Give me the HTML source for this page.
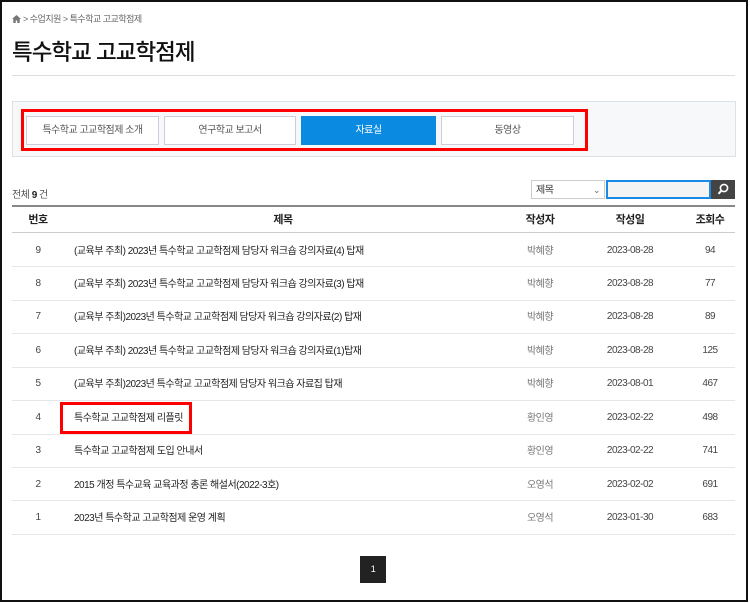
<!DOCTYPE html>
<html><head><meta charset="utf-8"><style>
*{margin:0;padding:0;box-sizing:border-box}
body{width:750px;height:603px;background:#fff;font-family:"Liberation Sans","Noto Sans CJK KR",sans-serif;position:relative;overflow:hidden;color:#333;letter-spacing:-0.5px}
.a{position:absolute}
.frame{left:0;top:0;width:748px;height:602px;border:2px solid #111}
.bc{left:12px;top:12px;font-size:9px;color:#666}
.title{left:12px;top:35px;font-size:22.5px;color:#111;font-weight:500;letter-spacing:-1px}
.hr{left:12px;top:75px;width:723px;height:1px;background:#ddd}
.tabbox{left:12px;top:101px;width:724px;height:56px;border:1px solid #dde2e8;background:#f6f8fa}
.red{border:3px solid #f00}
.tab{top:116px;height:29px;border:1px solid #ccd;background:#fff;font-size:10px;color:#555;text-align:center;line-height:27px}
.tab.on{background:#0a8ae0;border-color:#0a8ae0;color:#fff}
.row{left:12px;width:723px;height:1px;background:#e6e6e6}
.c{position:absolute;font-size:10px;color:#444;text-align:center;height:16px;line-height:16px;margin-top:-7px;white-space:nowrap}
.k{margin-top:-6px}
.h{font-weight:bold;color:#222;font-size:11px;margin-top:-7px}
</style></head><body>
<div class="a frame"></div>
<div class="a bc"><svg width="9" height="8" viewBox="0 0 9 8" style="vertical-align:-1px"><path d="M4.5 0L0 4h1.3v4h2.4V5.5h1.6V8h2.4V4H9z" fill="#777"/></svg> &gt; 수업지원 &gt; 특수학교 고교학점제</div>
<div class="a title">특수학교 고교학점제</div>
<div class="a hr"></div>
<div class="a tabbox"></div>
<div class="a red" style="left:21px;top:109px;width:567px;height:42px"></div>
<div class="a tab" style="left:26px;width:133px">특수학교 고교학점제 소개</div>
<div class="a tab" style="left:164px;width:132px">연구학교 보고서</div>
<div class="a tab on" style="left:301px;width:135px">자료실</div>
<div class="a tab" style="left:441px;width:133px">동영상</div>
<div class="a" style="left:12px;top:186px;font-size:10px;color:#555">전체 <b style="color:#222">9</b> 건</div>
<div class="a" style="left:531px;top:180px;width:74px;height:19px;border:1px solid #ccc;font-size:10px;color:#333;padding:3px 4px;line-height:14px">제목<span style="position:absolute;right:4px;top:2px;font-size:9px;color:#666">⌄</span></div>
<div class="a" style="left:606px;top:180px;width:105px;height:19px;border:2px solid #1a8ae8;background:#f4f4f4"></div>
<div class="a" style="left:711px;top:180px;width:24px;height:19px;background:#444"><svg width="24" height="19" viewBox="0 0 24 19"><circle cx="13" cy="8" r="3.6" fill="none" stroke="#fff" stroke-width="1.6"/><path d="M10.5 10.5L7.5 13.8" stroke="#fff" stroke-width="2"/></svg></div>
<div class="a" style="left:12px;top:205px;width:723px;height:2px;background:#888"></div>
<div class="c h" style="left:18px;width:40px;top:219px">번호</div>
<div class="c h" style="left:230px;width:106px;top:219px">제목</div>
<div class="c h" style="left:510px;width:60px;top:219px">작성자</div>
<div class="c h" style="left:595px;width:70px;top:219px">작성일</div>
<div class="c h" style="left:690px;width:40px;top:219px">조회수</div>
<div class="a row" style="top:232px;background:#ccc"></div>
<div class="a row" style="top:266px"></div><div class="a row" style="top:300px"></div><div class="a row" style="top:333px"></div><div class="a row" style="top:367px"></div><div class="a row" style="top:400px"></div><div class="a row" style="top:434px"></div><div class="a row" style="top:467px"></div><div class="a row" style="top:500px"></div><div class="a row" style="top:534px"></div>

<div class="c" style="left:18px;width:40px;top:250px">9</div><div class="c k" style="left:74px;top:250px;text-align:left;color:#222">(교육부 주최) 2023년 특수학교 고교학점제 담당자 워크숍 강의자료(4) 탑재</div><div class="c k" style="left:510px;width:60px;top:250px;color:#777">박혜향</div><div class="c" style="left:595px;width:70px;top:250px">2023-08-28</div><div class="c" style="left:690px;width:40px;top:250px">94</div>
<div class="c" style="left:18px;width:40px;top:283px">8</div><div class="c k" style="left:74px;top:283px;text-align:left;color:#222">(교육부 주최) 2023년 특수학교 고교학점제 담당자 워크숍 강의자료(3) 탑재</div><div class="c k" style="left:510px;width:60px;top:283px;color:#777">박혜향</div><div class="c" style="left:595px;width:70px;top:283px">2023-08-28</div><div class="c" style="left:690px;width:40px;top:283px">77</div>
<div class="c" style="left:18px;width:40px;top:316px">7</div><div class="c k" style="left:74px;top:316px;text-align:left;color:#222">(교육부 주최)2023년 특수학교 고교학점제 담당자 워크숍 강의자료(2) 탑재</div><div class="c k" style="left:510px;width:60px;top:316px;color:#777">박혜향</div><div class="c" style="left:595px;width:70px;top:316px">2023-08-28</div><div class="c" style="left:690px;width:40px;top:316px">89</div>
<div class="c" style="left:18px;width:40px;top:350px">6</div><div class="c k" style="left:74px;top:350px;text-align:left;color:#222">(교육부 주최) 2023년 특수학교 고교학점제 담당자 워크숍 강의자료(1)탑재</div><div class="c k" style="left:510px;width:60px;top:350px;color:#777">박혜향</div><div class="c" style="left:595px;width:70px;top:350px">2023-08-28</div><div class="c" style="left:690px;width:40px;top:350px">125</div>
<div class="c" style="left:18px;width:40px;top:383px">5</div><div class="c k" style="left:74px;top:383px;text-align:left;color:#222">(교육부 주최)2023년 특수학교 고교학점제 담당자 워크숍 자료집 탑재</div><div class="c k" style="left:510px;width:60px;top:383px;color:#777">박혜향</div><div class="c" style="left:595px;width:70px;top:383px">2023-08-01</div><div class="c" style="left:690px;width:40px;top:383px">467</div>
<div class="c" style="left:18px;width:40px;top:417px">4</div><div class="c k" style="left:74px;top:417px;text-align:left;color:#222">특수학교 고교학점제 리플릿</div><div class="c k" style="left:510px;width:60px;top:417px;color:#777">황인영</div><div class="c" style="left:595px;width:70px;top:417px">2023-02-22</div><div class="c" style="left:690px;width:40px;top:417px">498</div>
<div class="a red" style="left:60px;top:402px;width:132px;height:32px"></div>
<div class="c" style="left:18px;width:40px;top:450px">3</div><div class="c k" style="left:74px;top:450px;text-align:left;color:#222">특수학교 고교학점제 도입 안내서</div><div class="c k" style="left:510px;width:60px;top:450px;color:#777">황인영</div><div class="c" style="left:595px;width:70px;top:450px">2023-02-22</div><div class="c" style="left:690px;width:40px;top:450px">741</div>
<div class="c" style="left:18px;width:40px;top:484px">2</div><div class="c k" style="left:74px;top:484px;text-align:left;color:#222">2015 개정 특수교육 교육과정 총론 해설서(2022-3호)</div><div class="c k" style="left:510px;width:60px;top:484px;color:#777">오영석</div><div class="c" style="left:595px;width:70px;top:484px">2023-02-02</div><div class="c" style="left:690px;width:40px;top:484px">691</div>
<div class="c" style="left:18px;width:40px;top:517px">1</div><div class="c k" style="left:74px;top:517px;text-align:left;color:#222">2023년 특수학교 고교학점제 운영 계획</div><div class="c k" style="left:510px;width:60px;top:517px;color:#777">오영석</div><div class="c" style="left:595px;width:70px;top:517px">2023-01-30</div><div class="c" style="left:690px;width:40px;top:517px">683</div>
<div class="a" style="left:360px;top:556px;width:26px;height:27px;background:#222;color:#fff;font-size:9px;text-align:center;line-height:27px">1</div>
</body></html>
